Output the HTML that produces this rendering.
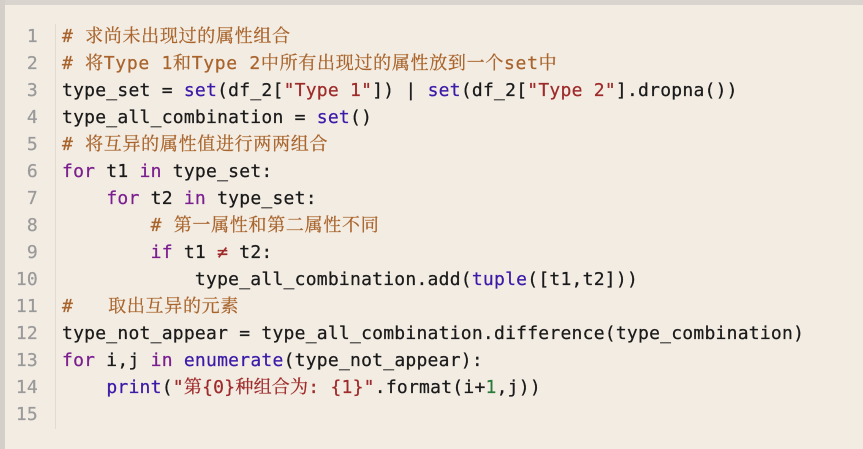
<!DOCTYPE html>
<html><head><meta charset="utf-8"><style>
html,body{margin:0;padding:0;}
body{width:863px;height:449px;background:#f3ece3;position:relative;overflow:hidden;}
.topb{position:absolute;left:0;top:0;width:863px;height:5px;background:#d9d4cd;}
.leftb{position:absolute;left:0;top:0;width:5px;height:449px;background:#d4cfc8;}
.gl{position:absolute;left:55px;top:24px;width:1px;height:405px;background:#e2dbd0;}
pre{margin:0;position:absolute;top:23px;font-family:"DejaVu Sans Mono","Noto Sans CJK SC",monospace;font-size:18px;line-height:27px;color:#1a1a1a;letter-spacing:0.24px;-webkit-text-stroke:0.25px currentColor;}
.num{left:0;width:38px;text-align:right;color:#9a9a9a;}
.code{left:62px;}
.c{color:#a8642c;font-family:"DejaVu Sans Mono","Noto Serif CJK SC",monospace;letter-spacing:0.7px;}
.k{color:#7b1f8f;}
.b{color:#3b1aa8;}
.s{color:#9e2a2a;}
.z{font-family:"DejaVu Sans Mono","Noto Serif CJK SC",monospace;}
.n{color:#2a7a3a;}
</style></head><body>
<div class="topb"></div><div class="leftb"></div><div class="gl"></div>
<pre class="num">1
2
3
4
5
6
7
8
9
10
11
12
13
14
15</pre>
<pre class="code"><span class="c"># 求尚未出现过的属性组合</span>
<span class="c"># 将Type 1和Type 2中所有出现过的属性放到一个set中</span>
type_set = <span class="b">set</span>(df_2[<span class="s">"Type 1"</span>]) | <span class="b">set</span>(df_2[<span class="s">"Type 2"</span>].dropna())
type_all_combination = <span class="b">set</span>()
<span class="c"># 将互异的属性值进行两两组合</span>
<span class="k">for</span> t1 <span class="k">in</span> type_set:
    <span class="k">for</span> t2 <span class="k">in</span> type_set:
        <span class="c"># 第一属性和第二属性不同</span>
        <span class="k">if</span> t1 <span class="s">≠</span> t2:
            type_all_combination.add(<span class="b">tuple</span>([t1,t2]))
<span class="c">#   取出互异的元素</span>
type_not_appear = type_all_combination.difference(type_combination)
<span class="k">for</span> i,j <span class="k">in</span> <span class="b">enumerate</span>(type_not_appear):
    <span class="b">print</span>(<span class="s z">"第{0}种组合为: {1}"</span>.format(i+<span class="n">1</span>,j))
</pre>
</body></html>
